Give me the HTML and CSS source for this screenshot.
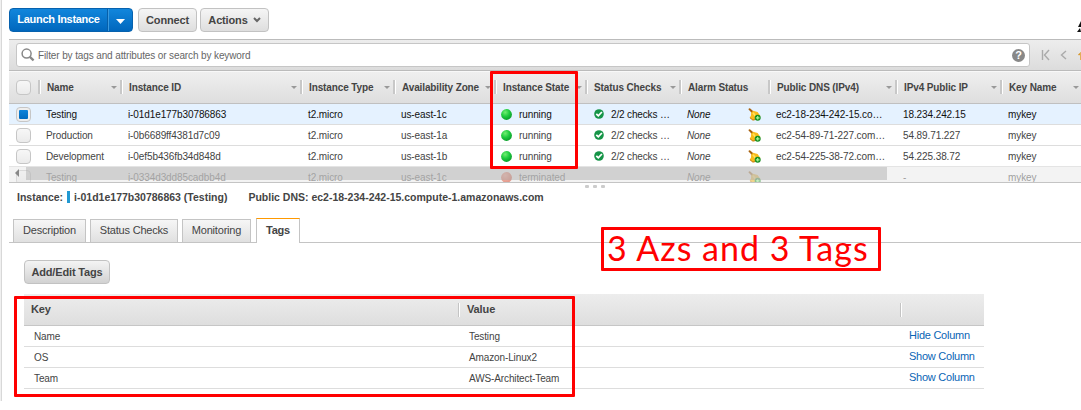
FILE: index.html
```html
<!DOCTYPE html>
<html lang="en">
<head>
<meta charset="utf-8">
<title>EC2 Instances</title>
<link rel="stylesheet" href="styles.css">
</head>
<body>
<svg class="defs" width="0" height="0">
  <defs>
    <radialGradient id="g" cx=".38" cy=".3" r=".75"><stop offset="0" stop-color="#72ee72"/><stop offset=".5" stop-color="#20cc40"/><stop offset="1" stop-color="#079a28"/></radialGradient>
    <radialGradient id="r" cx=".38" cy=".3" r=".75"><stop offset="0" stop-color="#ff8a70"/><stop offset="1" stop-color="#d83010"/></radialGradient>
  </defs>
  <symbol id="dot" viewBox="0 0 11 11"><circle cx="5.5" cy="5.5" r="5.4" fill="url(#g)"/></symbol>
  <symbol id="dead" viewBox="0 0 11 11"><circle cx="5.5" cy="5.5" r="5.4" fill="url(#r)"/></symbol>
  <symbol id="ok" viewBox="0 0 10 10"><circle cx="5" cy="5" r="4.8" fill="#159447"/><path d="M2.3 4.8l2 2L7.9 3" fill="none" stroke="#fff" stroke-width="1.8"/></symbol>
  <symbol id="bell" viewBox="0 0 13 13"><path d="M3.2 3.6L5 2.7l4.6 1.2L12.4 8 11 10.5l-6.2 1.8L1.8 9.6 3 7.5z" fill="#f9bb1b"/><path d="M.4 1.2Q1 .1 2.2.4L5 3 3.3 4.6z" fill="#a8610e"/><path d="M5 4.8l3.4 4.4" stroke="#ffe25a" stroke-width="1.7"/><path d="M1.9 9.7l3 2.4 2.3-.5" fill="none" stroke="#c07a10"/><circle cx="9.7" cy="9.8" r="3" fill="#178d20"/><path d="M9.7 8v3.6M7.9 9.8h3.6" stroke="#a8f598" stroke-width="1.2"/></symbol>
</svg>
<div class="console">
  <div class="toolbar">
    <div class="btn primary"><span class="launch">Launch Instance</span><span class="drop"><svg width="9" height="5"><path d="M0 0h9L4.5 5z" fill="#fff"/></svg></span></div>
    <div class="btn connect">Connect</div>
    <div class="btn actions">Actions<svg width="8" height="6"><path d="M1 1l3 3 3-3" fill="none" stroke="#666" stroke-width="2"/></svg></div>
    <svg class="corner" width="4" height="12"><path d="M4 0L1 6h3zM3 7L0 11h4z" fill="#111"/></svg>
  </div>
  <div class="filter">
    <div class="search">
      <svg width="14" height="14"><circle cx="5.6" cy="5.6" r="4.5" fill="none" stroke="#888" stroke-width="1.5"/><path d="M8.8 8.8l3.8 3.5" stroke="#888" stroke-width="2.3"/></svg>
      <span class="hint">Filter by tags and attributes or search by keyword</span>
      <span class="help">?</span>
    </div>
    <svg class="pager" width="40" height="12"><path d="M1.5 1v10M8 1L3.5 6 8 11M25 2l-4.5 4L25 10" fill="none" stroke="#aaa" stroke-width="1.4"/><path d="M37 5.5l3-2.5v2l-2 1.5z" fill="#d7962b"/><path d="M39 4h1v7h-1z" fill="#e4ad58"/></svg>
  </div>
  <div class="instances">
    <div class="row head">
      <div><i class="check"></i></div><div class="sort">Name</div><div class="sort">Instance ID</div><div class="sort">Instance Type</div><div class="sort">Availability Zone</div><div class="sort">Instance State</div><div class="sort">Status Checks</div><div>Alarm Status</div><div class="sort">Public DNS (IPv4)</div><div class="sort">IPv4 Public IP</div><div class="sort">Key Name</div>
    </div>
    <div class="row selected">
      <div><i class="check on"></i></div><div>Testing</div><div class="id">i-01d1e177b30786863</div><div>t2.micro</div><div>us-east-1c</div><div class="state"><svg><use href="#dot"/></svg>running</div><div class="status"><svg><use href="#ok"/></svg>2/2 checks …</div><div class="alarm"><em>None</em><svg><use href="#bell"/></svg></div><div class="dns">ec2-18-234-242-15.co…</div><div class="ip">18.234.242.15</div><div>mykey</div>
    </div>
    <div class="row">
      <div><i class="check"></i></div><div>Production</div><div class="id">i-0b6689ff4381d7c09</div><div>t2.micro</div><div>us-east-1a</div><div class="state"><svg><use href="#dot"/></svg>running</div><div class="status"><svg><use href="#ok"/></svg>2/2 checks …</div><div class="alarm"><em>None</em><svg><use href="#bell"/></svg></div><div class="dns">ec2-54-89-71-227.com…</div><div class="ip">54.89.71.227</div><div>mykey</div>
    </div>
    <div class="row">
      <div><i class="check"></i></div><div>Development</div><div class="id">i-0ef5b436fb34d848d</div><div>t2.micro</div><div>us-east-1b</div><div class="state"><svg><use href="#dot"/></svg>running</div><div class="status"><svg><use href="#ok"/></svg>2/2 checks …</div><div class="alarm"><em>None</em><svg><use href="#bell"/></svg></div><div class="dns">ec2-54-225-38-72.com…</div><div class="ip">54.225.38.72</div><div>mykey</div>
    </div>
    <div class="row">
      <div><i class="check"></i></div><div>Testing</div><div class="id">i-0334d3dd85cadbb4d</div><div>t2.micro</div><div>us-east-1c</div><div class="state"><svg><use href="#dead"/></svg>terminated</div><div></div><div class="alarm"><em>None</em><svg><use href="#bell"/></svg></div><div></div><div class="ip">-</div><div>mykey</div>
    </div>
    <div class="scroll"><svg width="4" height="8"><path d="M4 0v8L0 4z" fill="#888"/></svg><div class="thumb"></div></div>
  </div>
  <div class="grip"><i></i><i></i><i></i></div>
  <div class="summary"><span class="label">Instance:</span><i class="mark"></i><span class="name">i-01d1e177b30786863 (Testing)</span><span class="host">Public DNS: ec2-18-234-242-15.compute-1.amazonaws.com</span></div>
  <div class="tabs">
    <div class="tab t1">Description</div><div class="tab t2">Status Checks</div><div class="tab t3">Monitoring</div><div class="tab active">Tags</div>
  </div>
  <div class="btn edit">Add/Edit Tags</div>
  <div class="tags">
    <div class="trow thead"><div>Key</div><div>Value</div><div></div></div>
    <div class="trow"><div>Name</div><div>Testing</div><div class="link">Hide Column</div></div>
    <div class="trow"><div>OS</div><div>Amazon-Linux2</div><div class="link">Show Column</div></div>
    <div class="trow"><div>Team</div><div>AWS-Architect-Team</div><div class="link">Show Column</div></div>
  </div>
</div>
<div class="frame states"></div>
<div class="frame keys"></div>
<div class="frame note"><span>3 Azs and 3 Tags</span></div>
</body>
</html>
```
FILE: styles.css
```css
* { box-sizing: border-box; }
body { margin: 0; width: 1081px; height: 410px; overflow: hidden; position: relative; background: #fff; font-family: "Liberation Sans", Arial, sans-serif; font-size: 11px; color: #444; white-space: nowrap; }
svg { display: block; flex: none; }
.defs { position: absolute; }
.console { height: 401px; border-left: 1px solid #d8d8d8; margin-left: 1px; padding-left: 7px; box-shadow: -1px 0 #f0f0f0; }
.toolbar { display: flex; height: 39px; padding-top: 8px; }
.btn { display: flex; align-items: center; justify-content: center; height: 24px; border: 1px solid #c2c2c2; border-radius: 4px; background: linear-gradient(#f5f5f5, #dedede); font-weight: bold; color: #444; font-size: 11px; letter-spacing: -.15px; padding-bottom: 1px; }
.primary { width: 124px; background: linear-gradient(#1286dc, #0067bd); border-color: #0762ae; color: #fff; margin-right: 5px; padding: 0; }
.launch { width: 98px; height: 22px; line-height: 21px; text-align: center; border-right: 1px solid #075fa8; letter-spacing: -.3px; }
.drop { flex: 1; height: 22px; display: grid; place-items: center; border-left: 1px solid #3b9be0; padding-top: 2px; }
.connect { width: 59px; margin-right: 3px; }
.actions { width: 69px; gap: 5px; }
.corner { margin: 13px 0 0 auto; }
.filter { display: flex; align-items: center; height: 32px; background: linear-gradient(#ededed, #dcdcdc); border-top: 1px solid #bbb; border-bottom: 1px solid #bbb; padding-left: 7px; }
.search { display: flex; align-items: center; width: 1014px; height: 24px; background: #fff; border: 1px solid #c6c6c6; border-radius: 3px; padding: 0 4px; }
.hint { color: #666; margin-left: 3px; font-size: 10px; letter-spacing: -.12px; }
.help { margin-left: auto; width: 13px; height: 13px; line-height: 13px; border-radius: 50%; background: #888; color: #fff; font-weight: bold; text-align: center; font-size: 11px; }
.pager { margin-left: 11px; }
.instances { position: relative; height: 112px; overflow: hidden; border-bottom: 1px solid #c4c4c4; }
.row { display: grid; grid-template-columns: 29px 82px 180px 93px 101px 91px 94px 89px 127px 105px 82px; height: 21px; border-bottom: 1px solid #ddd; font-size: 10px; letter-spacing: -.1px; }
.row > div { display: flex; align-items: center; padding-left: 8px; min-width: 0; }
.row > div:first-child { padding-left: 7px; }
.head { height: 33px; background: linear-gradient(#efefef, #dedede); border-top: 1px solid #f8f8f8; border-bottom-color: #c0c0c0; font-size: 10px; letter-spacing: -.12px; font-weight: bold; }
.head > div { position: relative; padding-left: 9px; }
.head > div + div::before { content: ""; position: absolute; left: 0; top: 8px; height: 14px; width: 2px; background: #c8c8c8; border-right: 1px solid #fff; }
.sort::after { content: ""; margin: 0 3px 0 auto; border: 3px solid transparent; border-top-color: #999; border-bottom: 0; }
.selected { background: #e5f2ff; color: #111; }
.check { width: 15px; height: 15px; border: 1px solid #c6c6c6; border-radius: 4px; background: linear-gradient(#f7f7f7, #ebebeb); flex: none; }
.on { background: linear-gradient(#0d83da, #006abf) content-box, #eee; padding: 2px; }
.row .state { padding-left: 7px; gap: 7px; }
.state svg { width: 11px; height: 11px; }
.row .status { padding-left: 9px; gap: 7px; letter-spacing: -.15px; }
.status svg { width: 10px; height: 10px; }
.alarm svg { width: 13px; height: 13px; margin: 0 7px 0 auto; }
.scroll { position: absolute; left: 0; right: 0; top: 95px; height: 16px; background: rgba(234,234,234,.55); display: flex; padding: 1px 0 2px; }
.scroll svg { margin: 2px 7px 0 6px; }
.thumb { width: 861px; background: rgba(168,168,168,.45); }
.grip { display: flex; gap: 4px; height: 5px; padding: 2px 0 0 576px; }
.grip i { width: 4px; height: 3px; background: #ccc; border-radius: 1px; }
.summary { display: flex; align-items: center; height: 18px; padding: 0 0 1px 8px; font-weight: bold; font-size: 10.5px; }
.mark { width: 3px; height: 12px; background: #2299d2; margin: 0 4px; }
.host { margin-left: 21px; }
.tabs { display: flex; align-items: flex-end; gap: 4px; height: 37px; padding-left: 4px; border-bottom: 1px solid #c4c4c4; }
.tab { height: 23px; border: 1px solid #c4c4c4; border-bottom: 0; background: linear-gradient(#f6f6f6, #e0e0e0); font-size: 11px; letter-spacing: -.2px; line-height: 21px; text-align: center; }
.t1 { width: 73px; } .t2 { width: 88px; } .t3 { width: 69px; }
.active { width: 44px; height: 25px; margin: 0 0 -1px 1px; border-top-color: #f90; background: #fff; font-weight: bold; line-height: 23px; }
.edit { width: 86px; margin: 17px 0 10px 15px; background: linear-gradient(#f4f4f4, #d2d2d2); }
.tags { width: 960px; margin-left: 15px; }
.trow { display: grid; grid-template-columns: 434px 442px 84px; height: 21px; border-bottom: 1px solid #ddd; align-items: center; font-size: 10px; letter-spacing: -.12px; }
.trow > div { padding-left: 11px; }
.trow > div:first-child { padding-left: 10px; }
.trow .link { padding: 0 0 2px 9px; color: #0a65b5; font-size: 11px; letter-spacing: -.25px; }
.thead { height: 32px; background: linear-gradient(#ededed, #dedede); border-bottom-color: #c6c6c6; font-size: 11px; font-weight: bold; }
.thead > div:first-child { padding: 0 0 1px 7px; }
.thead > div + div { height: 14px; line-height: 13px; padding-left: 8px; border-left: 1px solid #c4c4c4; box-shadow: inset 1px 0 #fff; }
.frame { position: absolute; border: 3px solid #f00; border-radius: 1px; }
.states { left: 490px; top: 71px; width: 88px; height: 98px; }
.keys { left: 14px; top: 296px; width: 561px; height: 101px; }
.note { left: 601px; top: 227px; width: 280px; height: 44px; color: #f00; font: 34px/36px Lato, sans-serif; letter-spacing: 1px; padding-left: 3px; }
```
